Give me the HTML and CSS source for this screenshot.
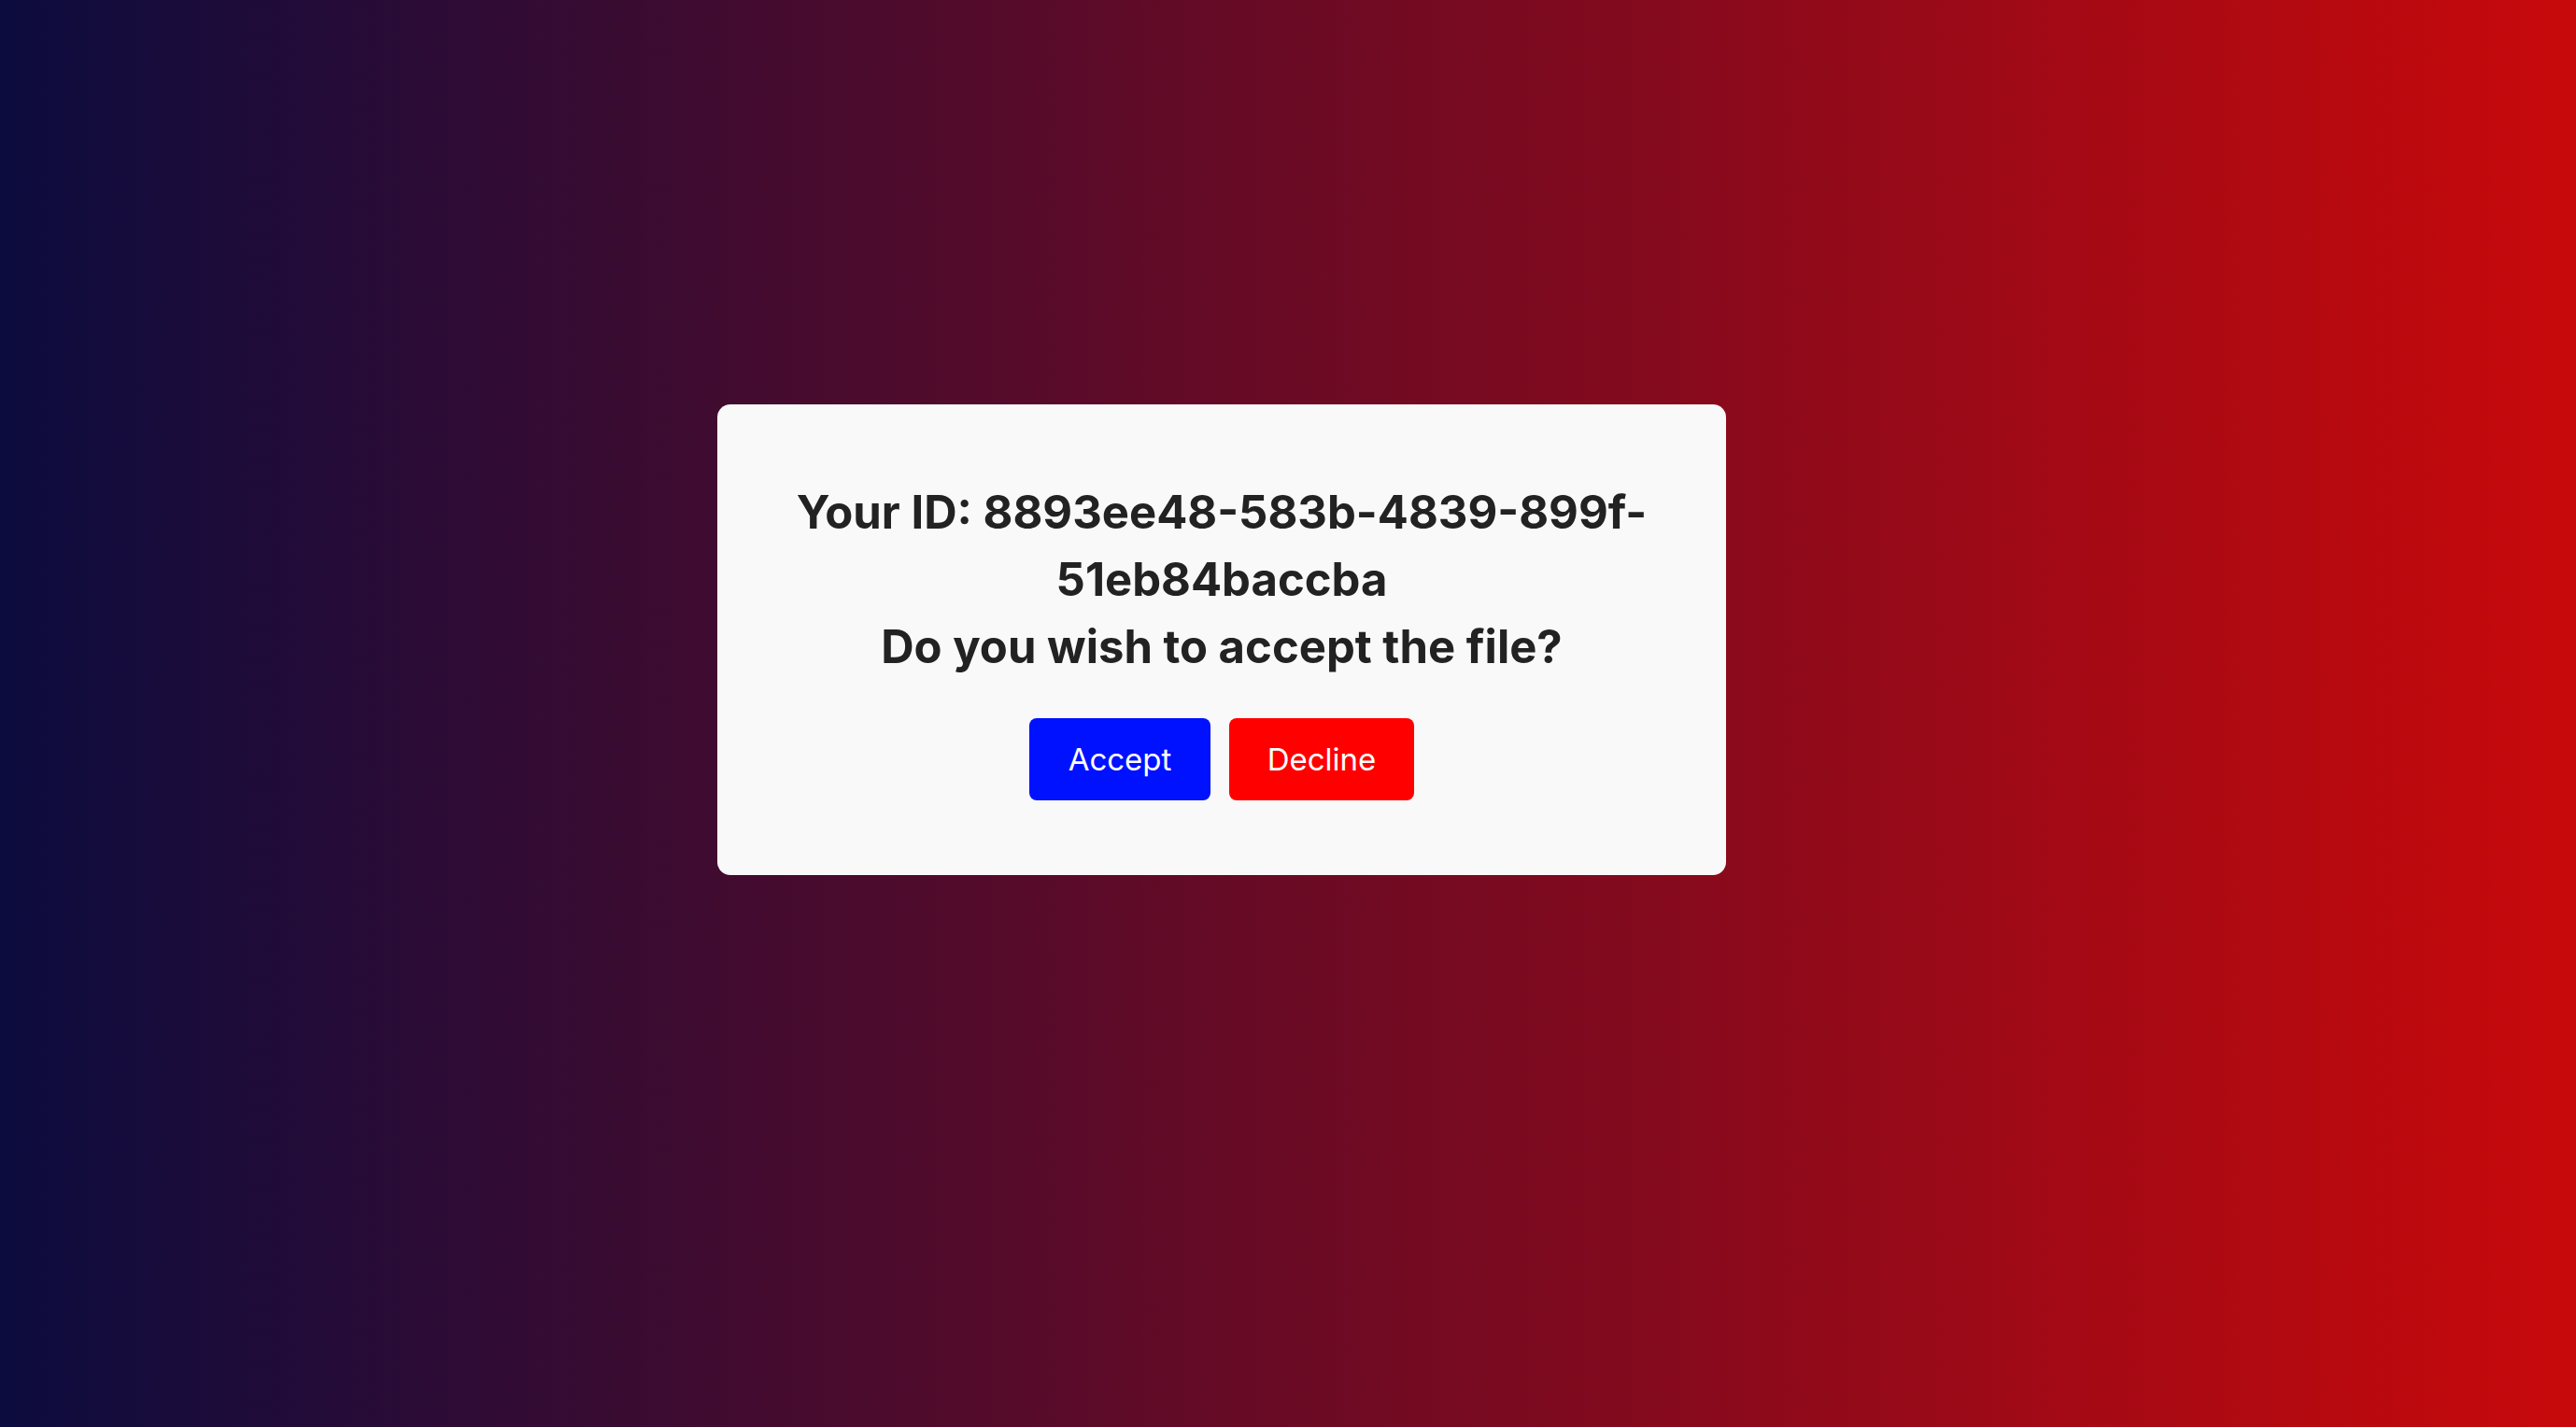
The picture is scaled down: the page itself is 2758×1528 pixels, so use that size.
FILE: index.html
```html
<!DOCTYPE html>
<html lang="en">
<head>
<meta charset="utf-8">
<title>File transfer</title>
<link rel="stylesheet" href="styles.css">
</head>
<body>
<main class="stage">
  <section class="card">
    <h2 class="prompt">Your ID: 8893ee48-583b-4839-899f-<br>51eb84baccba<br>Do you wish to accept the file?</h2>
    <div class="actions">
      <button class="btn btn-accept">Accept</button>
      <button class="btn btn-decline">Decline</button>
    </div>
  </section>
</main>
</body>
</html>
```
FILE: styles.css
```css
* { box-sizing: border-box; }
html, body { margin: 0; padding: 0; }
body {
  width: 100vw;
  height: 100vh;
  background: linear-gradient(90deg, #0c0c3e 0%, #c8090b 100%);
  font-family: "Inter", "Open Sans", sans-serif;
  overflow: hidden;
}
.stage {
  width: 100%;
  height: 100%;
  padding: 433px 0 0 768px;
}
.card {
  width: 1080px;
  height: 504px;
  background: #f9f9f9;
  border-radius: 14px;
  padding: 80px 40px 0;
  display: flex;
  flex-direction: column;
  align-items: center;
}
.prompt {
  margin: 0;
  font-size: 49px;
  line-height: 72px;
  font-weight: 700;
  color: #222222;
  text-align: center;
}
.actions {
  margin-top: 40px;
  display: flex;
  gap: 20px;
}
.btn {
  height: 88px;
  border: none;
  border-radius: 8px;
  color: #ffffff;
  font-family: "Inter", "Open Sans", sans-serif;
  font-size: 33px;
  font-weight: 400;
  padding: 0;
}
.btn-accept { background: #0011ff; width: 194px; }
.btn-decline { background: #ff0000; width: 198px; }
```
